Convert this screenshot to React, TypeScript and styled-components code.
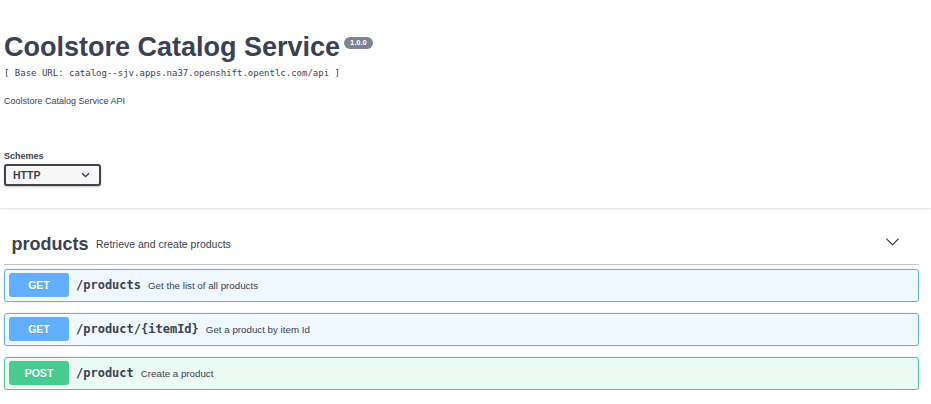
import React from "react";
import styled, { createGlobalStyle } from "styled-components";

const Global = createGlobalStyle`
  html, body { margin: 0; padding: 0; background: #fff; }
  body {
    font-family: "Liberation Sans", Arial, sans-serif;
    color: #3b4151;
  }
`;

const Page = styled.div`
  width: 931px;
`;

const Info = styled.div`
  padding: 32px 12px 0 4px;
`;

const TitleRow = styled.div`
  display: flex;
  align-items: flex-start;
`;

const Title = styled.h2`
  margin: 0;
  font-size: 27px;
  line-height: 31px;
  font-weight: 700;
  color: #3b4151;
`;

const Version = styled.span`
  margin: 5px 0 0 4px;
  padding: 2px 6px;
  border-radius: 40px;
  background: #7d8492;
  color: #fff;
  font-size: 7.5px;
  line-height: 8px;
  font-weight: 700;
`;

const BaseUrl = styled.div`
  margin-top: 5px;
  font-family: "DejaVu Sans Mono", "Liberation Mono", monospace;
  font-size: 9px;
  line-height: 11px;
  color: #3b4151;
`;

const Description = styled.p`
  margin: 17px 0 0;
  font-size: 9px;
  line-height: 11px;
  color: #3b4151;
`;

const SchemeContainer = styled.div`
  margin-top: 21px;
  padding: 23px 12px 22px 4px;
  background: #fff;
  box-shadow: 0 1px 2px 0 rgba(0, 0, 0, 0.15);
`;

const SchemeLabel = styled.div`
  font-size: 9px;
  line-height: 11px;
  font-weight: 700;
  color: #3b4151;
`;

const SchemeSelect = styled.div`
  margin-top: 2px;
  box-sizing: border-box;
  width: 97px;
  height: 22px;
  display: flex;
  align-items: center;
  justify-content: space-between;
  padding: 0 9px 0 7px;
  border: 2px solid #41444e;
  border-radius: 3px;
  background: #f7f7f7;
  box-shadow: 0 1px 2px 0 rgba(0, 0, 0, 0.25);
  font-size: 10.5px;
  font-weight: 700;
  color: #3b4151;
`;

const Section = styled.section`
  margin-top: 16px;
  padding: 0 12px 0 4px;
`;

const TagHeader = styled.div`
  height: 40px;
  display: flex;
  align-items: center;
  padding: 0 19px 0 7.5px;
  border-bottom: 1px solid rgba(59, 65, 81, 0.3);
`;

const TagName = styled.h4`
  margin: 0;
  font-size: 18px;
  line-height: 21px;
  font-weight: 700;
  color: #3b4151;
`;

const TagDesc = styled.small`
  margin-left: 7.5px;
  flex: 1;
  font-size: 10.5px;
  line-height: 12px;
  color: #3b4151;
`;

const ToggleIcon = styled.svg`
  display: block;
  margin-bottom: 6px;
`;

const Operations = styled.div`
  margin-top: 4px;
  display: flex;
  flex-direction: column;
  gap: 11px;
`;

type Method = "get" | "post";

const palette: Record<Method, { border: string; bg: string; badge: string }> = {
  get: { border: "#61affe", bg: "rgba(97,175,254,.1)", badge: "#61affe" },
  post: { border: "#49cc90", bg: "rgba(73,204,144,.1)", badge: "#49cc90" },
};

const Opblock = styled.div<{ $method: Method }>`
  display: flex;
  align-items: center;
  padding: 3px 4px 4px;
  border: 1px solid ${(p) => palette[p.$method].border};
  background: ${(p) => palette[p.$method].bg};
  border-radius: 3px;
  box-shadow: 0 0 2px rgba(0, 0, 0, 0.19);
`;

const MethodBadge = styled.span<{ $method: Method }>`
  width: 60px;
  height: 24px;
  display: flex;
  align-items: center;
  justify-content: center;
  border-radius: 3px;
  background: ${(p) => palette[p.$method].badge};
  color: #fff;
  font-size: 10.5px;
  font-weight: 700;
  text-shadow: 0 1px 0 rgba(0, 0, 0, 0.1);
`;

const OpPath = styled.span`
  padding: 0 7px;
  font-family: "DejaVu Sans Mono", "Liberation Mono", monospace;
  font-size: 12px;
  font-weight: 700;
  color: #3b4151;
`;

const OpSummary = styled.span`
  font-size: 9.75px;
  color: #3b4151;
`;

const arrowPath =
  "M17.418 6.109c.272-.268.709-.268.979 0s.271.701 0 .969l-7.908 7.83c-.27.268-.707.268-.979 0l-7.908-7.830c-.27-.268-.27-.701 0-.969.271-.268.709-.268.979 0L10 13.25l7.418-7.141z";

const ops: { method: Method; path: string; summary: string }[] = [
  { method: "get", path: "/products", summary: "Get the list of all products" },
  { method: "get", path: "/product/{itemId}", summary: "Get a product by item Id" },
  { method: "post", path: "/product", summary: "Create a product" },
];

export default function App() {
  return (
    <Page>
      <Global />
      <Info>
        <TitleRow>
          <Title>Coolstore Catalog Service</Title>
          <Version>1.0.0</Version>
        </TitleRow>
        <BaseUrl>[ Base URL: catalog--sjv.apps.na37.openshift.opentlc.com/api ]</BaseUrl>
        <Description>Coolstore Catalog Service API</Description>
      </Info>
      <SchemeContainer>
        <SchemeLabel>Schemes</SchemeLabel>
        <SchemeSelect>
          <span>HTTP</span>
          <svg width="9" height="6" viewBox="0 0 9 6">
            <polyline
              points="1,1.2 4.5,4.6 8,1.2"
              fill="none"
              stroke="#3b4151"
              strokeWidth="1.4"
            />
          </svg>
        </SchemeSelect>
      </SchemeContainer>
      <Section>
        <TagHeader>
          <TagName>products</TagName>
          <TagDesc>Retrieve and create products</TagDesc>
          <ToggleIcon width="15" height="15" viewBox="0 0 20 20">
            <path d={arrowPath} fill="#333" />
          </ToggleIcon>
        </TagHeader>
        <Operations>
          {ops.map((op) => (
            <Opblock key={op.path} $method={op.method}>
              <MethodBadge $method={op.method}>{op.method.toUpperCase()}</MethodBadge>
              <OpPath>{op.path}</OpPath>
              <OpSummary>{op.summary}</OpSummary>
            </Opblock>
          ))}
        </Operations>
      </Section>
    </Page>
  );
}
